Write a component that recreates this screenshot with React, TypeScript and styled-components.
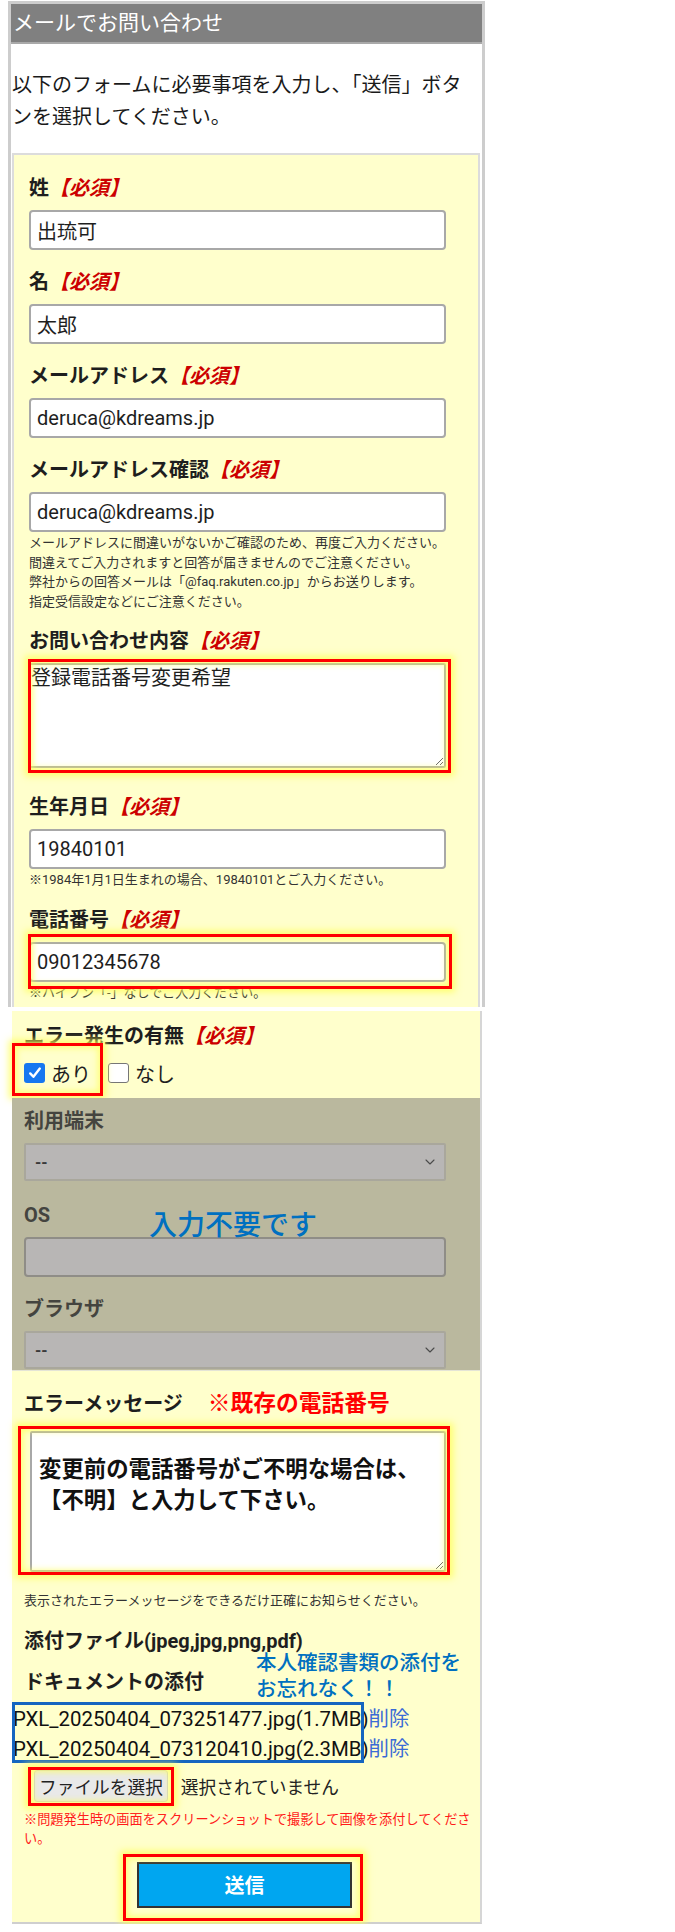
import React from "react";
import styled, { createGlobalStyle } from "styled-components";
import { ChevronDown } from "lucide-react";

const GlobalStyle = createGlobalStyle`
  html, body {
    margin: 0;
    padding: 0;
    background: #fff;
  }
  body {
    font-family: Roboto, "Noto Sans CJK JP", sans-serif;
    color: #222;
  }
  * {
    box-sizing: border-box;
  }
`;

interface TextField {
  label: string;
  value: string;
  notes?: string[];
}

const nameFields: TextField[] = [
  { label: "姓", value: "出琉可" },
  { label: "名", value: "太郎" },
  { label: "メールアドレス", value: "deruca@kdreams.jp" },
  {
    label: "メールアドレス確認",
    value: "deruca@kdreams.jp",
    notes: [
      "メールアドレスに間違いがないかご確認のため、再度ご入力ください。",
      "間違えてご入力されますと回答が届きませんのでご注意ください。",
      "弊社からの回答メールは「@faq.rakuten.co.jp」からお送りします。",
      "指定受信設定などにご注意ください。",
    ],
  },
];

const files = [
  { name: "PXL_20250404_073251477.jpg", size: "1.7MB" },
  { name: "PXL_20250404_073120410.jpg", size: "2.3MB" },
];

const App: React.FC = () => {
  return (
    <>
      <GlobalStyle />
      <Frame>
        <Header>メールでお問い合わせ</Header>
        <Intro>
          以下のフォームに必要事項を入力し、「送信」ボタンを選択してください。
        </Intro>
        <FormBox>
          {nameFields.map((f) => (
            <Field key={f.label}>
              <Label>
                {f.label}
                <Required>【必須】</Required>
              </Label>
              <TextInput readOnly defaultValue={f.value} />
              {f.notes && (
                <Note>
                  {f.notes.map((n) => (
                    <div key={n}>{n}</div>
                  ))}
                </Note>
              )}
            </Field>
          ))}

          <Field $gap={25}>
            <Label>
              お問い合わせ内容<Required>【必須】</Required>
            </Label>
            <Highlight $inset="-4px -5px -5px -1px">
              <Inquiry readOnly defaultValue="登録電話番号変更希望" />
            </Highlight>
          </Field>

          <Field>
            <Label>
              生年月日<Required>【必須】</Required>
            </Label>
            <TextInput readOnly defaultValue="19840101" />
            <Note>※1984年1月1日生まれの場合、19840101とご入力ください。</Note>
          </Field>

          <Field $gap={0}>
            <Label>
              電話番号<Required>【必須】</Required>
            </Label>
            <Highlight $inset="-8px -6px -7px -1px">
              <TextInput readOnly defaultValue="09012345678" />
            </Highlight>
            <Note>※ハイフン「-」なしでご入力ください。</Note>
          </Field>
        </FormBox>
      </Frame>

      <LowerBox>
        <Label>
          エラー発生の有無<Required>【必須】</Required>
        </Label>
        <CheckRow>
          <Highlight $inset="-15px -12px -8px -12px">
            <CheckItem>
              <Box $checked>
                <svg width="14" height="14" viewBox="0 0 14 14">
                  <path
                    d="M2.2 7.4 L5.4 10.8 L11.8 2.6"
                    fill="none"
                    stroke="#fff"
                    strokeWidth="2.4"
                    strokeLinecap="round"
                    strokeLinejoin="round"
                  />
                </svg>
              </Box>
              あり
            </CheckItem>
          </Highlight>
          <CheckItem>
            <Box $checked={false} />
            なし
          </CheckItem>
        </CheckRow>

        <Disabled>
          <Label $muted>利用端末</Label>
          <SelectWrap $gap={20}>
            <FakeSelect disabled defaultValue="--">
              <option>--</option>
            </FakeSelect>
            <Chevron size={16} strokeWidth={1.6} />
          </SelectWrap>
          <Label $muted>OS</Label>
          <DisabledInput disabled />
          <Label $muted>ブラウザ</Label>
          <SelectWrap $gap={0}>
            <FakeSelect disabled defaultValue="--">
              <option>--</option>
            </FakeSelect>
            <Chevron size={16} strokeWidth={1.6} />
          </SelectWrap>
          <NotNeeded>入力不要です</NotNeeded>
        </Disabled>

        <ErrorLabel>
          エラーメッセージ<Caution>※既存の電話番号</Caution>
        </ErrorLabel>
        <Highlight $inset="-5px -4px -3px -6px">
          <ErrorText
            readOnly
            defaultValue={"変更前の電話番号がご不明な場合は、\n【不明】と入力して下さい。"}
          />
        </Highlight>
        <Note>表示されたエラーメッセージをできるだけ正確にお知らせください。</Note>

        <Attach>
          <Label $tight>添付ファイル(jpeg,jpg,png,pdf)</Label>
          <Label>ドキュメントの添付</Label>
          <Reminder>
            本人確認書類の添付を
            <br />
            お忘れなく！！
          </Reminder>
          <FileList>
            {files.map((f) => (
              <FileRow key={f.name}>
                {f.name}({f.size})<DeleteLink>削除</DeleteLink>
              </FileRow>
            ))}
          </FileList>
          <FileRowControls>
            <Highlight $inset="-3px -6px -4px -6px">
              <FileButton type="button">ファイルを選択</FileButton>
            </Highlight>
            <NoFile>選択されていません</NoFile>
          </FileRowControls>
        </Attach>

        <RedNote>
          ※問題発生時の画面をスクリーンショットで撮影して画像を添付してください。
        </RedNote>

        <SubmitArea>
          <Highlight $inset="-8px -11px -13px -14px">
            <SubmitButton type="button">送信</SubmitButton>
          </Highlight>
        </SubmitArea>
      </LowerBox>
    </>
  );
};

const Frame = styled.section`
  margin: 1px 0 0 8px;
  width: 477px;
  border: 3px solid #cdcdcd;
  border-bottom: none;
`;

const Header = styled.h1`
  margin: 0;
  height: 40px;
  padding-left: 2px;
  background: #808080;
  border-bottom: 2px solid #a9a9a9;
  color: #fff;
  font-size: 21px;
  font-weight: 400;
  line-height: 38px;
`;

const Intro = styled.p`
  margin: 0;
  padding: 25px 2px 20px 1px;
  background: #fff;
  font-size: 20px;
  line-height: 32px;
  color: #1a1a1a;
`;

const FormBox = styled.div`
  margin: 0 2px 0 1px;
  padding: 19px 15px 7px;
  background: #ffffcc;
  border: 2px solid #dcdcdc;
  border-bottom: none;
`;

const Field = styled.div<{ $gap?: number }>`
  display: flow-root;
  margin-bottom: ${({ $gap }) => ($gap ?? 18)}px;
`;

const Label = styled.div<{ $muted?: boolean; $tight?: boolean }>`
  font-size: 20px;
  font-weight: 700;
  line-height: 28px;
  margin-bottom: ${({ $tight }) => ($tight ? "13px" : "8px")};
  color: ${({ $muted }) => ($muted ? "#44443f" : "#1e1e1e")};
`;

const Required = styled.span`
  color: #cc0000;
  font-style: italic;
`;

const TextInput = styled.input`
  display: block;
  width: 417px;
  height: 40px;
  padding: 0 6px;
  border: 2px solid #a8a8a8;
  border-radius: 4px;
  background: #fff;
  font-family: Roboto, "Noto Sans CJK JP", sans-serif;
  font-size: 20px;
  color: #1e1e1e;
  outline: none;
`;

const Note = styled.div`
  margin: 1px 0 -2px;
  font-size: 13px;
  line-height: 19.5px;
  color: #333;
`;

const Highlight = styled.div<{ $inset: string }>`
  position: relative;
  width: fit-content;

  &::after {
    content: "";
    position: absolute;
    inset: ${({ $inset }) => $inset};
    border: 3px solid #ff0000;
    box-shadow: 0 0 7px 3px rgba(255, 255, 90, 0.85),
      inset 0 0 6px 2px rgba(255, 255, 90, 0.75);
    pointer-events: none;
  }
`;

const Inquiry = styled.textarea`
  display: block;
  width: 417px;
  height: 105px;
  padding: 0;
  border: 2px solid #a8a8a8;
  border-radius: 2px;
  background: #fff;
  font-family: Roboto, "Noto Sans CJK JP", sans-serif;
  font-size: 20px;
  line-height: 26px;
  color: #1e1e1e;
  outline: none;
`;

const LowerBox = styled.div`
  margin: 4px 0 0 12px;
  width: 470px;
  padding: 11px 4px 14px 12px;
  background: #ffffcc;
  border-right: 2px solid #d6d6d6;
  border-bottom: 2px solid #cfcfcf;
`;

const CheckRow = styled.div`
  display: flex;
  align-items: center;
  gap: 17px;
  height: 30px;
  margin: 6px 0 10px;
`;

const CheckItem = styled.div`
  display: flex;
  align-items: center;
  gap: 6px;
  height: 30px;
  font-size: 20px;
  color: #1e1e1e;
`;

const Box = styled.span<{ $checked: boolean }>`
  display: flex;
  align-items: center;
  justify-content: center;
  width: 21px;
  height: 20px;
  border-radius: 3px;
  background: ${({ $checked }) => ($checked ? "#1677f0" : "#fff")};
  border: ${({ $checked }) => ($checked ? "none" : "1.5px solid #767676")};
`;

const Disabled = styled.div`
  position: relative;
  height: 273px;
  margin: 0 -4px 0 -12px;
  padding: 9px 12px 0;
  overflow: hidden;
  background: #bab89e;
  border-bottom: 1px solid #e4e4d6;
`;

const SelectWrap = styled.div<{ $gap: number }>`
  position: relative;
  width: 422px;
  height: 38px;
  margin-bottom: ${({ $gap }) => $gap}px;
`;

const FakeSelect = styled.select`
  appearance: none;
  width: 100%;
  height: 100%;
  padding-left: 9px;
  border: 2px solid #a9a79c;
  border-radius: 2px;
  background: #b8b6b5;
  font-family: Roboto, sans-serif;
  font-size: 16px;
  font-weight: 700;
  color: #3a3a3a;
  opacity: 1;
`;

const Chevron = styled(ChevronDown)`
  position: absolute;
  right: 8px;
  top: 11px;
  color: #4a4a4a;
`;

const DisabledInput = styled.input`
  display: block;
  width: 422px;
  height: 40px;
  margin-bottom: 18px;
  border: 2px solid #8f8d87;
  border-radius: 4px;
  background: #b8b6b5;
`;

const NotNeeded = styled.div`
  position: absolute;
  left: 137px;
  top: 108px;
  font-size: 28px;
  font-weight: 500;
  line-height: 40px;
  color: #0070c0;
`;

const ErrorLabel = styled.div`
  margin: 19px 0 13px;
  font-size: 20px;
  font-weight: 700;
  line-height: 28px;
  color: #1e1e1e;
`;

const Caution = styled.span`
  margin-left: 25px;
  font-size: 22.75px;
  color: #ff0000;
`;

const ErrorText = styled.textarea`
  display: block;
  width: 416px;
  height: 141px;
  margin: 0 0 19px 6px;
  padding: 21px 7px 10px;
  border: 2px solid #a8a8a8;
  border-radius: 2px;
  background: #fff;
  font-family: Roboto, "Noto Sans CJK JP", sans-serif;
  font-size: 22.4px;
  font-weight: 700;
  line-height: 31px;
  color: #111;
  outline: none;
`;

const Attach = styled.div`
  position: relative;
  margin-top: 18px;
`;

const Reminder = styled.div`
  position: absolute;
  left: 232px;
  top: 23px;
  font-size: 20.5px;
  font-weight: 500;
  line-height: 26px;
  color: #0070c0;
`;

const FileList = styled.div`
  position: relative;
  width: fit-content;
  margin: 7px 0 0 -11px;

  &::after {
    content: "";
    position: absolute;
    inset: -2px 45px 1px -1px;
    border: 3px solid #1565c0;
    pointer-events: none;
  }
`;

const FileRow = styled.div`
  font-size: 20.4px;
  line-height: 30px;
  color: #111;
  white-space: nowrap;
`;

const DeleteLink = styled.span`
  color: #3a6bd6;
`;

const FileRowControls = styled.div`
  display: flex;
  align-items: center;
  gap: 13px;
  margin: 6px 0 0 10px;
`;

const FileButton = styled.button`
  display: block;
  height: 32px;
  padding: 0 4px;
  border: 1px solid #cfcfcf;
  border-radius: 3px;
  background: #e9e9e9;
  font-family: Roboto, "Noto Sans CJK JP", sans-serif;
  font-size: 17.7px;
  color: #222;
`;

const NoFile = styled.span`
  font-size: 17.7px;
  color: #222;
`;

const RedNote = styled.div`
  margin-top: 8px;
  font-size: 13.2px;
  line-height: 19.5px;
  color: #ff1a1a;
`;

const SubmitArea = styled.div`
  display: flex;
  margin: 13px 0 0 113px;
`;

const SubmitButton = styled.button`
  display: block;
  width: 215px;
  height: 46px;
  border: 2px solid #333;
  background: #00a6f0;
  color: #fff;
  font-family: Roboto, "Noto Sans CJK JP", sans-serif;
  font-size: 20px;
  font-weight: 700;
`;

export default App;
